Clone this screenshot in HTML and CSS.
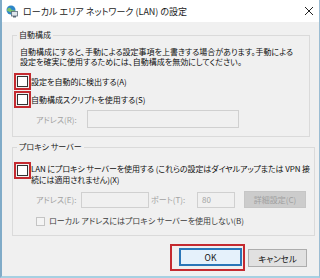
FILE: index.html
```html
<!DOCTYPE html>
<html lang="ja">
<head>
<meta charset="utf-8">
<title>ローカル エリア ネットワーク (LAN) の設定</title>
<link rel="stylesheet" href="styles.css">
</head>
<body>
<div class="window">
    <div class="titlebar">
        <svg class="appicon" width="12" height="13" viewBox="0 0 12 13">
            <circle cx="5" cy="5" r="4.5" fill="#2f86c8"/>
            <path d="M1.5 3.5 Q4 2 5 4 Q6 6 8.5 5 L9 7 Q6 8.5 4 7 Q2 6 1 6 Z" fill="#7cc36b"/>
            <rect x="5.5" y="6.5" width="6" height="4.5" fill="#dfe6ec" stroke="#5a6a78" stroke-width="0.8"/>
            <rect x="7" y="11" width="3" height="1.5" fill="#5a6a78"/>
        </svg>
        <span class="title">ローカル エリア ネットワーク (LAN) の設定</span>
        <span class="close">
            <svg width="10" height="10" viewBox="0 0 10 10"><path d="M1 1 L9 9 M9 1 L1 9" stroke="#222" stroke-width="1"/></svg>
        </span>
    </div>
    <!--/titlebar-->
    <div class="content">
        <fieldset class="group group-auto">
            <legend>自動構成</legend>
            <p class="desc">自動構成にすると、手動による設定事項を上書きする場合があります。手動による<br>設定を確実に使用するためには、自動構成を無効にしてください。</p>
            <div class="check-row">
                <span class="mark"><span class="box"></span></span>
                <span class="label">設定を自動的に検出する(A)</span>
            </div>
            <div class="check-row">
                <span class="mark"><span class="box"></span></span>
                <span class="label">自動構成スクリプトを使用する(S)</span>
            </div>
            <div class="addr-row">
                <span class="off addr-label">アドレス(R):</span>
                <span class="field field-script"></span>
            </div>
        </fieldset>
        <fieldset class="group group-proxy">
            <legend>プロキシ サーバー</legend>
            <div class="check-row wrap-row">
                <span class="mark"><span class="box"></span></span>
                <span class="label">LAN にプロキシ サーバーを使用する (これらの設定はダイヤルアップまたは VPN 接<br>続には適用されません)(X)</span>
            </div>
            <div class="proxy-row">
                <span class="off proxy-label">アドレス(E):</span>
                <span class="field field-addr"></span>
                <span class="off port-label">ポート(T):</span>
                <span class="field field-port">80</span>
                <span class="btn-off">詳細設定(C)</span>
            </div>
            <div class="local-row">
                <span class="box-off"></span>
                <span>ローカル アドレスにはプロキシ サーバーを使用しない(B)</span>
            </div>
        </fieldset>
        <div class="footer">
            <span class="mark-ok"><span class="btn btn-ok">OK</span></span>
            <span class="btn">キャンセル</span>
        </div>
    </div>
</div>
<!--/window-->
</body>
</html>
```

FILE: styles.css
```css
body,p,fieldset,legend{margin:0;padding:0;}
body{width:320px;height:278px;overflow:hidden;background:#f0f0f0;font-family:"Noto Sans CJK JP","Noto Sans",sans-serif;font-feature-settings:"palt";color:#111;}
.window{height:278px;box-sizing:border-box;border-left:2px solid #80abc8;border-right:1px solid #9cbdd3;border-bottom:2px solid #a6d0e2;display:flex;flex-direction:column;}
.titlebar{height:22px;flex:none;background:#fff;display:flex;align-items:center;padding-left:4px;}
.appicon{margin-right:5px;}
.title{font-size:9px;color:#1a1a1a;flex:1;}
.close{width:20px;display:flex;justify-content:center;}
.content{flex:1;padding:0 9px 0 10px;}
.group{border:1px solid #dadada;font-size:8px;white-space:nowrap;}
.group legend{line-height:12px;margin-left:3px;padding:0 2px;color:#222;}
.group-auto{margin-top:7px;padding:6px 6px 8px 1px;}
.group-proxy{margin-top:4px;padding:8px 4px 8px 1px;}
.desc{line-height:10px;padding-left:6px;}
.check-row{display:flex;align-items:center;height:17px;margin-top:1px;}
.desc + .check-row{margin-top:6px;}
.mark{width:17px;height:17px;box-sizing:border-box;border:2px solid #c42a30;display:flex;align-items:center;justify-content:center;flex:none;}
.box{width:11px;height:11px;box-sizing:border-box;border:1px solid #333;background:#fff;}
.label{line-height:11px;}
.wrap-row{align-items:flex-start;height:auto;}
.wrap-row .label{margin-top:1px;letter-spacing:-0.1px;}
.addr-row{display:flex;align-items:center;margin-top:2px;padding-left:22px;}
.off{color:#a2a2a2;}
.addr-label{width:51px;}
.field{height:18px;box-sizing:border-box;border:1px solid #d0d0d0;background:#f0f0f0;color:#a2a2a2;display:flex;align-items:center;padding-left:3px;}
.field-script{width:152px;}
.proxy-row{display:flex;align-items:center;margin-top:6px;padding-left:22px;height:17px;}
.proxy-row .field{height:16px;}
.proxy-label{width:45px;}
.field-addr{width:68px;}
.port-label{margin-left:2px;width:46px;}
.field-port{width:38px;padding-left:4px;}
.btn-off{width:62px;height:17px;margin-left:9px;box-sizing:border-box;border:1px solid #c6c6c6;background:#cccccc;color:#a0a0a0;display:flex;align-items:center;justify-content:center;}
.local-row{display:flex;align-items:center;margin-top:7px;padding-left:22px;line-height:12px;color:#3c3c3c;}
.box-off{width:9px;height:9px;box-sizing:border-box;border:1px solid #c4c4c4;background:#f4f4f4;margin-right:4px;}
.footer{display:flex;justify-content:flex-end;align-items:center;margin-top:8px;padding-right:3px;font-size:8.5px;}
.mark-ok{border:2px solid #c42a30;padding:2px 1px 3px 7px;margin-right:3px;}
.btn{width:59px;height:18px;box-sizing:border-box;border:1px solid #adadad;background:#e1e1e1;display:flex;align-items:center;justify-content:center;}
.btn-ok{width:63px;border:2px solid #2a76b8;background:#e5f1fb;}
```
